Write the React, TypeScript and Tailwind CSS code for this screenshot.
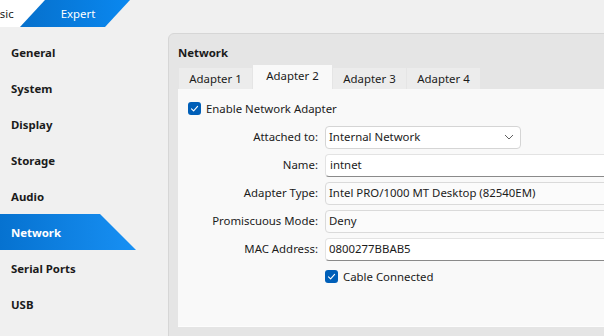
import React from "react";

const sections = [
  "General",
  "System",
  "Display",
  "Storage",
  "Audio",
  "Network",
  "Serial Ports",
  "USB",
];

const adapters = ["Adapter 1", "Adapter 2", "Adapter 3", "Adapter 4"];

const CheckBox = () => (
  <div className="w-[13px] h-[13px] rounded-[3px] bg-[#005fb8] flex items-center justify-center shrink-0">
    <svg width="9" height="9" viewBox="0 0 9 9" fill="none">
      <path d="M1.5 4.8 L3.6 6.8 L7.6 2.4" stroke="white" strokeWidth="1.1" strokeLinecap="round" strokeLinejoin="round" />
    </svg>
  </div>
);

const Row = ({ label, children }: { label: string; children: React.ReactNode }) => (
  <div className="flex items-center h-[28px]">
    <div className="w-[131px] text-right pr-[1px] shrink-0">{label}</div>
    <div className="ml-[6px]">{children}</div>
  </div>
);

const App = () => {
  return (
    <div
      className="w-[604px] h-[336px] overflow-hidden bg-[#f0f0f0] text-[#1b1b1b] text-[11.4px]"
      style={{ fontFamily: '"Noto Sans", "Open Sans", sans-serif' }}
    >
      {/* top mode tabs */}
      <div className="flex h-[27px]">
        <div className="w-[45px] h-full bg-white [clip-path:polygon(0_0,45px_0,20px_100%,0_100%)] flex items-center overflow-hidden">
          <span className="ml-[-14px] text-[11.4px]">Basic</span>
        </div>
        <div className="ml-[-25px] w-[110px] h-full bg-gradient-to-r from-[#0670cc] to-[#0a88f0] [clip-path:polygon(25px_0,110px_0,85px_100%,0_100%)] flex items-center justify-center">
          <span className="text-white text-[11.4px] ml-[6px]">Expert</span>
        </div>
      </div>

      <div className="flex mt-[6px]">
        {/* sidebar */}
        <div className="w-[168px] shrink-0 pt-[1px]">
          {sections.map((s) =>
            s === "Network" ? (
              <div
                key={s}
                className="h-[36px] w-[136px] flex items-center pl-[11px] pt-[2px] font-bold text-white bg-gradient-to-r from-[#0672d0] to-[#1790f4] [clip-path:polygon(0_0,100px_0,136px_100%,0_100%)]"
              >
                {s}
              </div>
            ) : (
              <div key={s} className="h-[36px] flex items-center pl-[11px] pt-[2px] font-bold">
                {s}
              </div>
            )
          )}
        </div>

        {/* group box */}
        <div className="flex-1 h-[310px] border border-[#d6d6d6] rounded-tl-[6px] bg-[#e5e5e5] pl-[9px] flex flex-col">
          <div className="font-bold h-[31px] flex items-end pb-[4px]">Network</div>
          <div className="flex items-end h-[24px] pl-[1px] gap-[1px]">
            {adapters.map((a) =>
              a === "Adapter 2" ? (
                <div key={a} className="w-[79px] h-[24px] bg-[#f9f9f9] flex items-center justify-center text-[11.4px] pb-[2px]">
                  {a}
                </div>
              ) : (
                <div key={a} className="w-[73px] h-[21px] bg-[#ececec] flex items-center justify-center text-[11.4px]">
                  {a}
                </div>
              )
            )}
          </div>
          <div className="w-[440px] h-[238px] bg-[#f9f9f9] border-b border-[#fdfdfd] pl-[10px] pt-[13px]">
            <div className="flex items-center gap-[5px] h-[13px]">
              <CheckBox />
              <span>Enable Network Adapter</span>
            </div>
            <div className="mt-[8px]">
              <Row label="Attached to:">
                <div className="w-[196px] h-[23px] bg-white border border-[#d5d5d5] rounded-[4px] flex items-center justify-between pl-[3px] pr-[6px]">
                  <span>Internal Network</span>
                  <svg width="10" height="6" viewBox="0 0 10 6" fill="none">
                    <path d="M1 1 L5 5 L9 1" stroke="#606060" strokeWidth="1" />
                  </svg>
                </div>
              </Row>
              <Row label="Name:">
                <div className="w-[290px] h-[23px] bg-white border border-[#e3e3e3] border-b-[#8a8a8a] rounded-[4px] flex items-center pl-[4px]">
                  intnet
                </div>
              </Row>
              <Row label="Adapter Type:">
                <div className="w-[290px] h-[23px] bg-[#fbfbfb] border border-[#dadada] rounded-[4px] flex items-center pl-[3px]">
                  Intel PRO/1000 MT Desktop (82540EM)
                </div>
              </Row>
              <Row label="Promiscuous Mode:">
                <div className="w-[290px] h-[23px] bg-[#fbfbfb] border border-[#dadada] rounded-[4px] flex items-center pl-[3px]">
                  Deny
                </div>
              </Row>
              <Row label="MAC Address:">
                <div className="w-[290px] h-[23px] bg-white border border-[#e3e3e3] border-b-[#8a8a8a] rounded-[4px] flex items-center pl-[3px]">
                  0800277BBAB5
                </div>
              </Row>
              <div className="flex items-center gap-[5px] h-[27px] pl-[137px]">
                <CheckBox />
                <span>Cable Connected</span>
              </div>
            </div>
          </div>
        </div>
      </div>
    </div>
  );
};

export default App;
